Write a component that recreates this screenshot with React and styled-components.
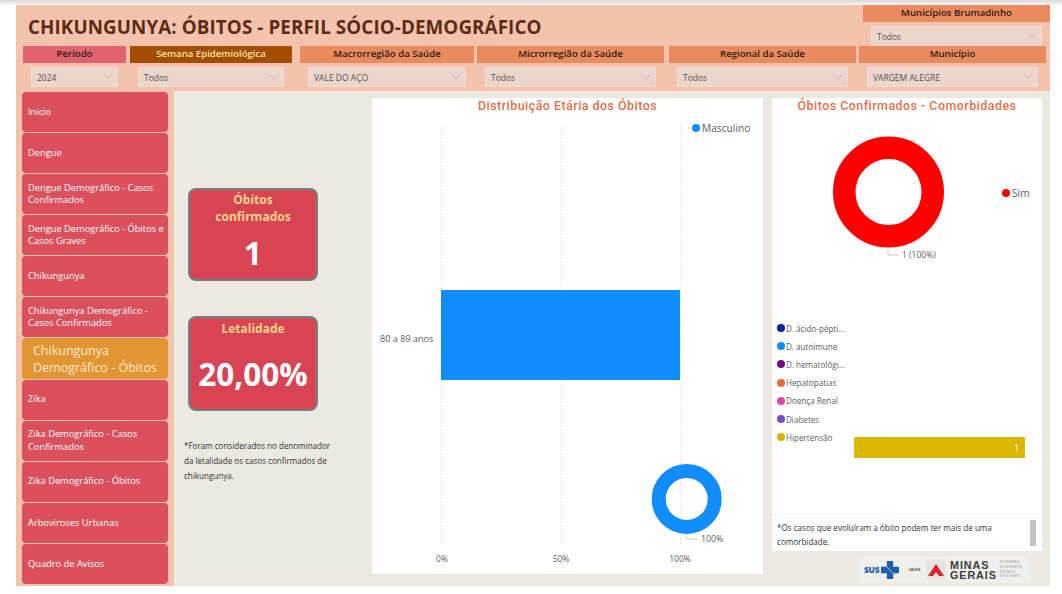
import React from 'react';
import styled, { createGlobalStyle } from 'styled-components';
import { ChevronDown } from 'lucide-react';

const GlobalStyle = createGlobalStyle`
    html, body {
        margin: 0;
        padding: 0;
        background: #fff;
    }
    * {
        box-sizing: border-box;
    }
    body {
        font-family: "Open Sans", "Noto Sans", sans-serif;
    }
`;

const Page = styled.div`
    width: 1062px;
    height: 594px;
    overflow: hidden;
    background: linear-gradient(#d9d9d9 0, #f4f4f4 5px, #fff 5px);
    padding: 5px 12px 0 16px;
`;

const Report = styled.div`
    width: 1034px;
    height: 581px;
    background: #ece9e3;
    display: flex;
    flex-direction: column;
`;

const Header = styled.header`
    height: 86px;
    background: #f4c3ae;
    display: flex;
    flex-direction: column;
`;

const TitleRow = styled.div`
    height: 41px;
    display: flex;
    justify-content: space-between;
`;

const Title = styled.h1`
    margin: 0;
    padding: 13px 0 0 12px;
    font-size: 18.8px;
    line-height: 18px;
    font-weight: 700;
    color: #5e2c16;
    white-space: nowrap;
    letter-spacing: 0.1px;
`;

const FilterRow = styled.div`
    display: flex;
    padding-left: 7px;
`;

const Filter = styled.div`
    width: ${p => p.$w}px;
    margin-left: ${p => p.$ml || 0}px;
    flex: none;
`;

const FilterLabel = styled.div`
    height: 17px;
    background: ${p => p.$bg || '#e98b5e'};
    color: ${p => p.$color || '#2f1a12'};
    font-size: 9.6px;
    font-weight: 600;
    line-height: 16px;
    text-align: center;
`;

const Dropdown = styled.div`
    height: 20px;
    margin: 4px 8px 0;
    background: #ecd5cb;
    border: 1px solid #efdcd3;
    display: flex;
    align-items: center;
    justify-content: space-between;
    padding: 0 2px 0 5px;
    color: #555;
    font-size: 8.5px;
    svg {
        color: #8a817c;
    }
`;

const Main = styled.div`
    flex: 1;
    display: flex;
    min-height: 0;
`;

const Sidebar = styled.nav`
    width: 158px;
    flex: none;
    background: #f4c3ae;
    padding: 1px 6px 2px;
    display: flex;
    flex-direction: column;
    gap: 1px;
`;

const NavItem = styled.div`
    flex: 1;
    border-radius: 4px;
    background: ${p => (p.$active ? '#e29633' : '#db505c')};
    color: ${p => (p.$active ? '#fdebd0' : '#fff')};
    font-size: ${p => (p.$active ? '12.5px' : '9.3px')};
    line-height: ${p => (p.$active ? '17px' : '12.5px')};
    padding: ${p => (p.$active ? '0 4px 0 11px' : '0 0 0 6px')};
    display: flex;
    align-items: center;
`;

const KpiColumn = styled.div`
    width: 198px;
    flex: none;
    padding: 97px 0 0 14px;
    display: flex;
    flex-direction: column;
`;

const KpiCard = styled.div`
    width: 130px;
    height: ${p => p.$h}px;
    margin-bottom: ${p => p.$mb}px;
    background: #d84454;
    border: 2px solid #74807c;
    border-radius: 8px;
    text-align: center;
    padding-top: ${p => p.$pt}px;
`;

const KpiLabel = styled.div`
    color: #fbd48c;
    font-size: 12px;
    line-height: 17px;
    font-weight: 700;
`;

const KpiValue = styled.div`
    color: #fff;
    font-size: ${p => p.$size}px;
    line-height: 40px;
    font-weight: 700;
    margin-top: ${p => p.$mt}px;
`;

const Note = styled.p`
    margin: 0 0 0 -4px;
    width: 150px;
    font-size: 8.06px;
    line-height: 15px;
    color: #333;
`;

const ChartCard = styled.section`
    width: 391px;
    height: 476px;
    margin-top: 7px;
    background: #fff;
    flex: none;
`;

const CardTitle = styled.h2`
    margin: 0;
    height: 20px;
    font-family: Roboto, "Liberation Sans", sans-serif;
    font-weight: 500;
    font-size: 12.4px;
    line-height: 16px;
    letter-spacing: 0.5px;
    color: #e0704a;
    text-align: center;
`;

const RightColumn = styled.div`
    width: 270px;
    margin: 7px 0 0 9px;
    flex: none;
    display: flex;
    flex-direction: column;
`;

const RightCard = styled.section`
    height: 453px;
    background: #fff;
    display: flex;
    flex-direction: column;
`;

const ComorbidityRow = styled.div`
    display: flex;
    padding: 0 0 0 5px;
    margin-top: 11px;
    height: 148px;
`;

const Legend = styled.ul`
    list-style: none;
    margin: 0;
    padding: 0;
    width: 77px;
    flex: none;
`;

const LegendItem = styled.li`
    height: 18.2px;
    display: flex;
    align-items: center;
    gap: 1px;
    font-size: 8.1px;
    color: #605e5c;
    white-space: nowrap;
`;

const Dot = styled.span`
    width: 8px;
    height: 8px;
    border-radius: 50%;
    background: ${p => p.$color};
    flex: none;
`;

const BarArea = styled.div`
    flex: 1;
    padding: 118px 17px 0 0;
`;

const Bar = styled.div`
    height: 21px;
    background: #ddb600;
    color: #fff;
    font-size: 8.5px;
    line-height: 21px;
    text-align: right;
    padding-right: 6px;
`;

const Footnote = styled.div`
    margin-top: auto;
    height: 37px;
    border-top: 1px solid #f2f2f2;
    padding: 6px 6px 0 5px;
    display: flex;
    justify-content: space-between;
    font-size: 8.1px;
    line-height: 14px;
    color: #333;
`;

const Scrollbar = styled.div`
    width: 6px;
    height: 26px;
    flex: none;
    background: #c4c4c4;
    margin: -1px 0 0 10px;
`;

const LogoBar = styled.div`
    width: 171px;
    height: 27px;
    margin: 5px 0 0 87px;
    background: #efefeb;
    display: flex;
    align-items: center;
    padding-left: 5px;
`;

const Sus = styled.span`
    width: 17px;
    font-size: 8.5px;
    font-weight: 800;
    color: #1f5ea8;
    letter-spacing: -0.3px;
    white-space: nowrap;
`;

const Saude = styled.span`
    width: 17px;
    font-size: 3.5px;
    font-weight: 700;
    color: #555;
    margin-left: 10px;
`;

const TriangleBox = styled.span`
    width: 20px;
    height: 21px;
    background: #e6e6e3;
    display: flex;
    align-items: center;
    justify-content: center;
`;

const Minas = styled.span`
    font-family: "Liberation Sans", Arial, sans-serif;
    font-size: 10.8px;
    line-height: 10px;
    font-weight: 700;
    letter-spacing: 0.9px;
    color: #3c3c3c;
    margin-left: 4px;
`;

const Motto = styled.span`
    font-size: 3px;
    line-height: 4.8px;
    letter-spacing: 0.8px;
    color: #777;
    margin-left: 3px;
`;

const navItems = [
    'Inicio',
    'Dengue',
    'Dengue Demográfico - Casos Confirmados',
    'Dengue Demográfico - Óbitos e Casos Graves',
    'Chikungunya',
    'Chikungunya Demográfico - Casos Confirmados',
    'Chikungunya Demográfico - Óbitos',
    'Zika',
    'Zika Demográfico - Casos Confirmados',
    'Zika Demográfico - Óbitos',
    'Arboviroses Urbanas',
    'Quadro de Avisos',
];

const filters = [
    { label: 'Período', value: '2024', w: 103, bg: '#e0636f' },
    { label: 'Semana Epidemiológica', value: 'Todos', w: 162, ml: 4, bg: '#a24d00', color: '#ffe3a8' },
    { label: 'Macrorregião da Saúde', value: 'VALE DO AÇO', w: 174, ml: 8 },
    { label: 'Microrregião da Saúde', value: 'Todos', w: 187, ml: 3 },
    { label: 'Regional da Saúde', value: 'Todos', w: 187, ml: 5 },
    { label: 'Município', value: 'VARGEM ALEGRE', w: 187, ml: 3 },
];

const comorbidities = [
    ['D. ácido-pépti...', '#12239e'],
    ['D. autoimune', '#118dff'],
    ['D. hematológi...', '#750985'],
    ['Hepatopatias', '#e66c37'],
    ['Doença Renal', '#e044a7'],
    ['Diabetes', '#744ec2'],
    ['Hipertensão', '#d9b300'],
];

const FilterBox = ({ label, value, w, ml, bg, color }) => (
    <Filter $w={w} $ml={ml}>
        <FilterLabel $bg={bg} $color={color}>{label}</FilterLabel>
        <Dropdown>
            {value}
            <ChevronDown size={14} strokeWidth={0.8} />
        </Dropdown>
    </Filter>
);

const svgText = { fontFamily: '"Open Sans", sans-serif', fontSize: 8.5, fill: '#605e5c' };

// y positions inside the svg are relative to the card, title takes 20px
const AgeChart = () => (
    <svg width="391" height="456" viewBox="0 0 391 456">
        {[69.5, 189.5, 308.5].map(x => (
            <line key={x} x1={x} x2={x} y1="8" y2="428" stroke="#d5d5d5" strokeDasharray="1 2" />
        ))}
        <circle cx="324" cy="10" r="4" fill="#118dff" />
        <text x="330" y="14" style={{ ...svgText, fontSize: 10.2 }}>Masculino</text>
        <rect x="69" y="172" width="239" height="90" fill="#118dff" />
        <text x="8" y="224" style={{ ...svgText, fontSize: 9.1 }}>80 a 89 anos</text>
        <text x="70" y="444" textAnchor="middle" style={svgText}>0%</text>
        <text x="189" y="444" textAnchor="middle" style={svgText}>50%</text>
        <text x="308" y="444" textAnchor="middle" style={svgText}>100%</text>
        <circle cx="314.7" cy="381" r="28" fill="none" stroke="#118dff" strokeWidth="14" />
        <path d="M314.7 417 v4 h11" fill="none" stroke="#ccc" />
        <text x="329" y="424" style={{ ...svgText, fontSize: 8.8 }}>100%</text>
    </svg>
);

const SimChart = () => (
    <svg width="270" height="190" viewBox="0 0 270 190" style={{ display: 'block' }}>
        <circle cx="116.5" cy="74" r="44.25" fill="none" stroke="#ff0000" strokeWidth="22.5" />
        <circle cx="234" cy="75" r="4" fill="#ff0000" />
        <text x="240" y="79" style={{ ...svgText, fontSize: 10.2 }}>Sim</text>
        <path d="M116 131 v6 h11" fill="none" stroke="#ccc" />
        <text x="130" y="140" style={svgText}>1 (100%)</text>
    </svg>
);

export default function App() {
    return (
        <Page>
            <GlobalStyle />
            <Report>
                <Header>
                    <TitleRow>
                        <Title>CHIKUNGUNYA: ÓBITOS - PERFIL SÓCIO-DEMOGRÁFICO</Title>
                        <Filter $w={187}>
                            <FilterLabel>Municípios Brumadinho</FilterLabel>
                            <Dropdown>
                                Todos
                                <ChevronDown size={14} strokeWidth={0.8} />
                            </Dropdown>
                        </Filter>
                    </TitleRow>
                    <FilterRow>
                        {filters.map(f => <FilterBox key={f.label} {...f} />)}
                    </FilterRow>
                </Header>
                <Main>
                    <Sidebar>
                        {navItems.map((item, i) => (
                            <NavItem key={item} $active={i === 6}>{item}</NavItem>
                        ))}
                    </Sidebar>
                    <KpiColumn>
                        <KpiCard $h={93} $mb={35} $pt={1}>
                            <KpiLabel>Óbitos<br />confirmados</KpiLabel>
                            <KpiValue $size={32} $mt={8}>1</KpiValue>
                        </KpiCard>
                        <KpiCard $h={95} $mb={27} $pt={2}>
                            <KpiLabel>Letalidade</KpiLabel>
                            <KpiValue $size={31.5} $mt={17}>20,00%</KpiValue>
                        </KpiCard>
                        <Note>*Foram considerados no denominador da letalidade os casos confirmados de chikungunya.</Note>
                    </KpiColumn>
                    <ChartCard>
                        <CardTitle>Distribuição Etária dos Óbitos</CardTitle>
                        <AgeChart />
                    </ChartCard>
                    <RightColumn>
                        <RightCard>
                            <CardTitle>Óbitos Confirmados - Comorbidades</CardTitle>
                            <SimChart />
                            <ComorbidityRow>
                                <Legend>
                                    {comorbidities.map(([name, color]) => (
                                        <LegendItem key={name}><Dot $color={color} />{name}</LegendItem>
                                    ))}
                                </Legend>
                                <BarArea><Bar>1</Bar></BarArea>
                            </ComorbidityRow>
                            <Footnote>
                                <span>*Os casos que evoluíram a óbito podem ter mais de uma comorbidade.</span>
                                <Scrollbar />
                            </Footnote>
                        </RightCard>
                        <LogoBar>
                            <Sus>SUS</Sus>
                            <svg width="18" height="18" viewBox="0 0 20 20">
                                <path d="M0 6.5h6.5V0h7v6.5H20v7h-6.5V20h-7v-6.5H0z" fill="#1f5ea8" />
                                <path d="M6.5 6.5l7 7" stroke="#fff" strokeWidth="0.7" />
                            </svg>
                            <Saude>SAÚDE</Saude>
                            <TriangleBox>
                                <svg width="16" height="12" viewBox="0 0 16 12">
                                    <path d="M8 0L16 12h-5L8 8l-3 4H0z" fill="#e0202a" />
                                </svg>
                            </TriangleBox>
                            <Minas>MINAS<br />GERAIS</Minas>
                            <Motto>GOVERNO<br />DIFERENTE<br />ESTADO<br />EFICIENTE</Motto>
                        </LogoBar>
                    </RightColumn>
                </Main>
            </Report>
        </Page>
    );
}
